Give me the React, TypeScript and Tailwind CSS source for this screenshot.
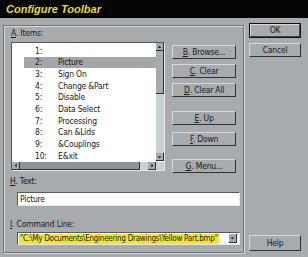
import React from "react";

const font = { fontFamily: '"DejaVu Sans Condensed", "Liberation Sans", Arial, sans-serif' };

const items = [
  ["1:", ""],
  ["2:", "Picture"],
  ["3:", "Sign On"],
  ["4:", "Change &Part"],
  ["5:", "Disable"],
  ["6:", "Data Select"],
  ["7:", "Processing"],
  ["8:", "Can &Lids"],
  ["9:", "&Couplings"],
  ["10:", "E&xit"],
];

const txt = "text-[8.5px] tracking-[-0.2px] leading-none";

const Btn = ({ k, label, className = "" }: { k: string; label: string; className?: string }) => (
  <div
    className={
      "flex items-center justify-center h-[14px] bg-[#a7abae] border border-t-[#d6dadc] border-l-[#d6dadc] border-r-[#2e3134] border-b-[#2e3134] text-[#1a1a1a] " +
      txt +
      " " +
      className
    }
  >
    <span>
      <span className="underline">{k}</span>. {label}
    </span>
  </div>
);

const Arrow = ({ dir }: { dir: "up" | "down" | "left" | "right" }) => {
  const pts = {
    up: "1,4 4,1 7,4",
    down: "1,2 4,5 7,2",
    left: "4,1 1,4 4,7",
    right: "2,1 5,4 2,7",
  }[dir];
  const vb = dir === "up" || dir === "down" ? "0 0 8 6" : "0 0 6 8";
  return (
    <svg viewBox={vb} className={dir === "up" || dir === "down" ? "w-[5px] h-[4px]" : "w-[4px] h-[5px]"}>
      <polygon points={pts} fill="#111" />
    </svg>
  );
};

const SBtn = ({ dir }: { dir: "up" | "down" | "left" | "right" }) => (
  <div className="w-[8px] h-[8px] flex items-center justify-center bg-[#a7abae] border-r border-b border-[#2e3134] shrink-0">
    <Arrow dir={dir} />
  </div>
);

export default function App() {
  return (
    <div className="w-[308px] h-[257px] bg-[#a7abae] overflow-hidden text-[#1a1a1a]" style={font}>
      {/* Title bar */}
      <div className="h-[18px] bg-[#050505] flex items-center pl-[6px]">
        <span
          className="text-[11px] font-bold italic text-[#ecd924]"
          style={{ fontFamily: '"Liberation Sans", Arial, sans-serif' }}
        >
          Configure Toolbar
        </span>
      </div>

      <div className="flex items-start pl-[3px]">
        {/* Group box */}
        <div className="mt-[7px] w-[241px] h-[228px] border border-[#6f7377] shadow-[inset_1px_1px_0_#d6dadc,1px_1px_0_#d6dadc] px-[7px] pt-[2px]">
          <div className={txt + " h-[11px] flex items-center"}>
            <span>
              <span className="underline">A</span>. Items:
            </span>
          </div>

          <div className="flex mt-[3px]">
            {/* List box */}
            <div className="w-[157px] h-[129px] bg-white border border-t-[#55595c] border-l-[#55595c] border-r-[#e4e8ea] border-b-[#e4e8ea] flex flex-col">
              <div className="flex flex-1 min-h-0">
                <div className="flex-1 pt-[2px]">
                  {items.map(([n, t], i) => (
                    <div
                      key={n}
                      className={
                        "h-[11.7px] flex items-center " +
                        txt +
                        " " +
                        (i === 1 ? "bg-[#a3a7aa] ml-[12px] pl-[11px]" : "pl-[23px]")
                      }
                    >
                      <span className="w-[23px]">{n}</span>
                      <span>{t}</span>
                    </div>
                  ))}
                </div>
                {/* Vertical scrollbar */}
                <div className="w-[8px] flex flex-col bg-[#c9d1d1]">
                  <SBtn dir="up" />
                  <div className="h-[43px] bg-[#a7abae] border-r border-b border-[#2e3134]" />
                  <div className="flex-1" />
                  <SBtn dir="down" />
                </div>
              </div>
              {/* Horizontal scrollbar */}
              <div className="h-[9px] flex items-end">
                <SBtn dir="left" />
                <div className="w-[120px] h-[8px] bg-[#8e9396] border-r border-b border-[#2e3134]" />
                <div className="flex-1 h-[8px] bg-[#c9d1d1]" />
                <SBtn dir="right" />
                <div className="w-[8px] h-[8px] bg-[#c9d1d1]" />
              </div>
            </div>

            {/* Buttons */}
            <div className="ml-[7px] w-[65px] flex flex-col">
              <Btn k="B" label="Browse..." className="mt-[3px]" />
              <Btn k="C" label="Clear" className="mt-[5px]" />
              <Btn k="D" label="Clear All" className="mt-[5px]" />
              <Btn k="E" label="Up" className="mt-[14px]" />
              <Btn k="F" label="Down" className="mt-[7px]" />
              <Btn k="G" label="Menu..." className="mt-[13px]" />
            </div>
          </div>

          <div className={txt + " h-[11px] flex items-center mt-[3px] ml-[-1px]"}>
            <span>
              <span className="underline">H</span>. Text:
            </span>
          </div>
          <div className={"ml-[6px] mt-[5px] w-[223px] h-[14px] bg-white border border-t-[#55595c] border-l-[#55595c] border-r-[#e4e8ea] border-b-[#e4e8ea] flex items-center pl-[2px] " + txt}>
            Picture
          </div>

          <div className={txt + " h-[11px] flex items-center mt-[13px] ml-[-1px]"}>
            <span>
              <span className="underline">I</span>. Command Line:
            </span>
          </div>
          <div className="ml-[6px] mt-[2px] w-[223px] h-[13px] bg-white border border-t-[#55595c] border-l-[#55595c] border-r-[#e4e8ea] border-b-[#e4e8ea] flex items-center pl-[1px] pr-[2px]">
            <div className="flex-1 min-w-0 h-[10px] flex items-center">
              <span className="bg-[#efe43c] h-[10px] flex items-center px-[1px] whitespace-nowrap text-[8px] tracking-[-0.25px] leading-none">
                "C:\My Documents\Engineering Drawings\Yellow Part.bmp"
              </span>
            </div>
            <div className="w-[8px] h-[9px] flex items-center justify-center bg-[#a7abae] border-r border-b border-[#2e3134] shrink-0">
              <Arrow dir="down" />
            </div>
          </div>
        </div>

        {/* Right column */}
        <div className="ml-[5px] mt-[5px] w-[52px] h-[228px] flex flex-col justify-between">
          <div className="flex flex-col gap-[5px]">
            <div className="h-[15px] border border-[#111] flex">
              <div className={"flex-1 flex items-center justify-center bg-[#a7abae] border border-t-[#d6dadc] border-l-[#d6dadc] border-r-[#44484b] border-b-[#44484b] " + txt}>
                OK
              </div>
            </div>
            <div className={"h-[14px] flex items-center justify-center bg-[#a7abae] border border-t-[#d6dadc] border-l-[#d6dadc] border-r-[#2e3134] border-b-[#2e3134] " + txt}>
              Cancel
            </div>
          </div>
          <div className={"h-[16px] flex items-center justify-center bg-[#a7abae] border border-t-[#d6dadc] border-l-[#d6dadc] border-r-[#2e3134] border-b-[#2e3134] " + txt}>
            Help
          </div>
        </div>
      </div>
    </div>
  );
}
